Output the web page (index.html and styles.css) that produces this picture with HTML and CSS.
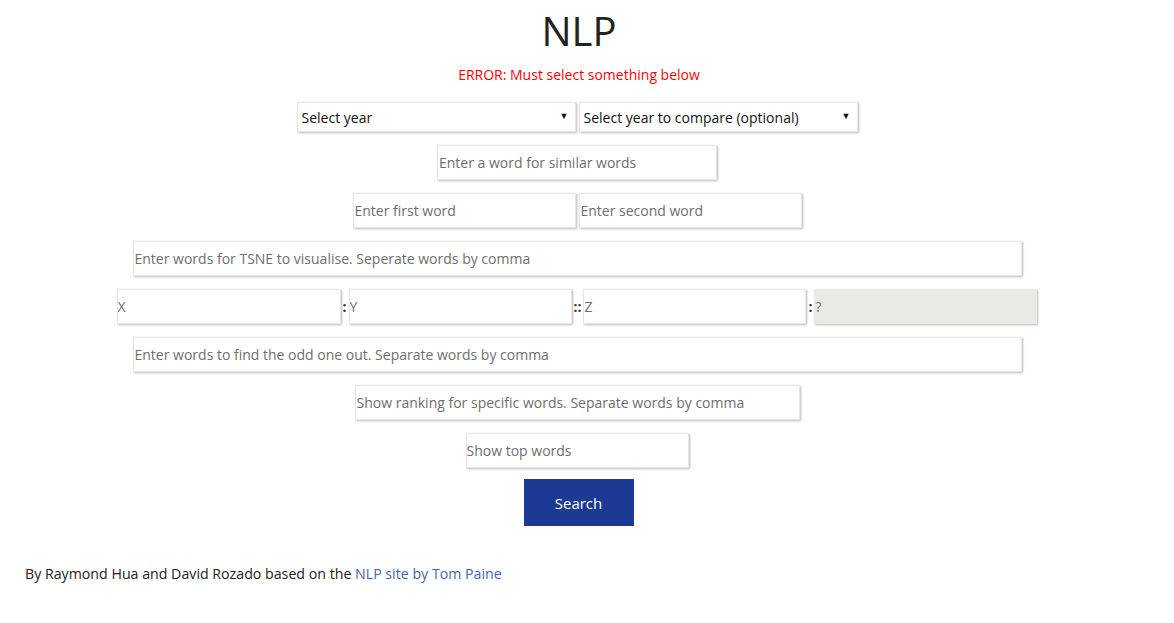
FILE: index.html
```html
<!DOCTYPE html>
<html>
<head>
<meta charset="utf-8">
<link rel="stylesheet" href="styles.css">
</head>
<body>
<main class="page">
  <h1 class="title">NLP</h1>
  <p class="error">ERROR: Must select something below</p>
  <form class="form">
    <div class="row">
      <div class="select-wrap">
        <select class="select"><option>Select year</option></select>
        <span class="arrow">▼</span>
      </div>
      <div class="select-wrap">
        <select class="select"><option>Select year to compare (optional)</option></select>
        <span class="arrow">▼</span>
      </div>
    </div>
    <div class="row gap13"><input class="field w279" placeholder="Enter a word for similar words"></div>
    <div class="row gap13">
      <input class="field w222" placeholder="Enter first word">
      <input class="field w223" placeholder="Enter second word">
    </div>
    <div class="row gap13"><input class="field w889" placeholder="Enter words for TSNE to visualise. Seperate words by comma"></div>
    <div class="row gap13 analogy">
      <input class="field w224 tight" placeholder="X">
      <span class="sep">:</span>
      <input class="field w223 tight" placeholder="Y">
      <span class="sep">::</span>
      <input class="field w223 tight" placeholder="Z">
      <span class="sep">:</span>
      <input class="field w223 tight result" placeholder="?" disabled>
    </div>
    <div class="row gap13"><input class="field w889" placeholder="Enter words to find the odd one out. Separate words by comma"></div>
    <div class="row gap13"><input class="field w445" placeholder="Show ranking for specific words. Separate words by comma"></div>
    <div class="row gap13"><input class="field w223 tight" placeholder="Show top words"></div>
    <div class="row gap11"><button type="button" class="search">Search</button></div>
  </form>
  <footer class="footer">By Raymond Hua and David Rozado based on the <a class="link" href="#">NLP site by Tom Paine</a></footer>
</main>
</body>
</html>
```
FILE: styles.css
```css
* { box-sizing: border-box; }
html, body { margin: 0; padding: 0; background: #fff; }
body {
  font-family: "Open Sans", "Noto Sans", sans-serif;
  color: #222;
}
.page {
  width: 1154px;
  padding-top: 8px;
}
.title {
  margin: 0;
  text-align: center;
  font-size: 40px;
  font-weight: 500;
  line-height: 46px;
  color: #222;
  padding-left: 4px;
}
.error {
  margin: 12px 0 0;
  text-align: center;
  color: #ff0000;
  font-size: 14px;
  line-height: 18px;
  padding-left: 4px;
}
.form {
  display: flex;
  flex-direction: column;
  margin-top: 18px;
}
.row {
  display: flex;
  justify-content: center;
  align-items: center;
  gap: 3px;
}
.gap13 { margin-top: 13px; }
.gap11 { margin-top: 11px; }
.select-wrap {
  position: relative;
  width: 279px;
  height: 30px;
}
.select {
  appearance: none;
  -webkit-appearance: none;
  width: 100%;
  height: 100%;
  border: 1px solid #e6e6e6;
  box-shadow: 1px 1px 2px rgba(0,0,0,0.28);
  background: #fff;
  font-family: inherit;
  font-size: 14px;
  color: #111;
  padding: 0 4px;
  border-radius: 0;
  outline: none;
}
.arrow {
  position: absolute;
  right: 7px;
  top: 9px;
  font-size: 9px;
  line-height: 10px;
  color: #111;
  pointer-events: none;
}
.field {
  height: 35px;
  border: 1px solid #e6e6e6;
  box-shadow: 1px 1px 2px rgba(0,0,0,0.28);
  background: #fff;
  font-family: inherit;
  font-size: 14px;
  color: #333;
  padding: 0 1px;
  border-radius: 0;
  outline: none;
}
.field::placeholder { color: #6e6e6e; opacity: 1; }
.tight { padding: 0 0; }
.w222 { width: 223px; }
.w223 { width: 223px; }
.w224 { width: 224px; }
.w279 { width: 280px; }
.w445 { width: 445px; }
.w889 { width: 889px; }
.analogy { gap: 2px; }
.sep {
  font-size: 14px;
  font-weight: 700;
  color: #333;
  line-height: 35px;
  padding: 0;
}
.result { background: #eae9e3; border-color: #eae9e3; }
.search {
  width: 110px;
  height: 47px;
  border: none;
  background: #1c3a94;
  color: #fff;
  font-family: inherit;
  font-size: 15px;
  cursor: pointer;
  border-radius: 0;
  margin-left: 3px;
}
.footer {
  margin-top: 38px;
  padding-left: 25px;
  font-size: 14.2px;
  color: #222;
}
.link { color: #4a5fb5; text-decoration: none; }
```
